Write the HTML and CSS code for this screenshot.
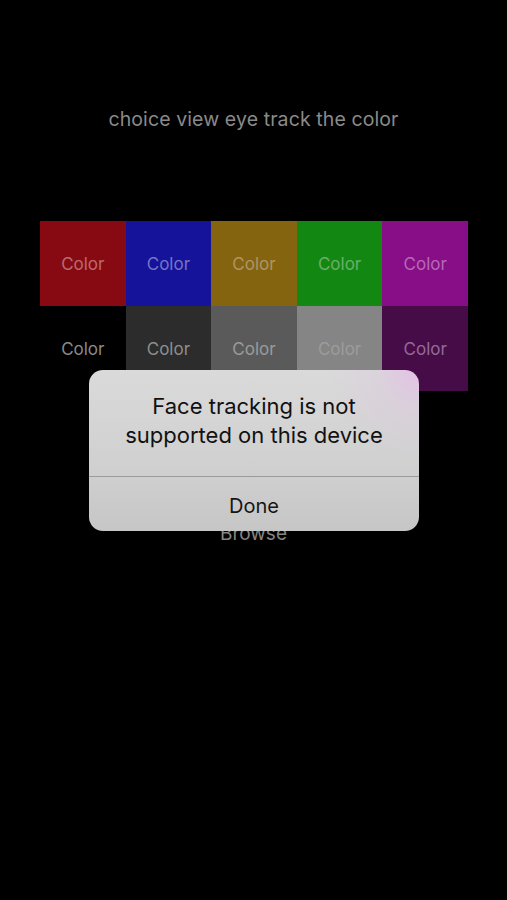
FILE: index.html
```html
<!DOCTYPE html>
<html>
<head>
<meta charset="utf-8">
<link rel="stylesheet" href="styles.css">
</head>
<body>
<main class="screen">
  <h1 class="title">choice view eye track the color</h1>
  <div class="grid">
    <div class="tile red">Color</div>
    <div class="tile blue">Color</div>
    <div class="tile olive">Color</div>
    <div class="tile green">Color</div>
    <div class="tile magenta">Color</div>
    <div class="tile black">Color</div>
    <div class="tile dark">Color</div>
    <div class="tile mid">Color</div>
    <div class="tile light">Color</div>
    <div class="tile plum">Color</div>
  </div>
  <div class="browse">Browse</div>
  <div class="alert">
    <div class="alert-msg">Face tracking is not<br>supported on this device</div>
    <div class="alert-btn">Done</div>
  </div>
</main>
</body>
</html>
```
FILE: styles.css
```css
html, body {
  margin: 0;
  background: #000;
}
.screen {
  position: relative;
  width: 507px;
  height: 900px;
  background: #000;
  font-family: Inter, "Noto Sans", sans-serif;
  display: flex;
  flex-direction: column;
  align-items: center;
}
.title {
  margin: 106px 0 0;
  font-size: 19.5px;
  font-weight: 400;
  color: #8a8a8a;
  line-height: 26px;
  letter-spacing: 0.1px;
}
.grid {
  margin-top: 89px;
  display: grid;
  grid-template-columns: repeat(5, 85.6px);
  grid-auto-rows: 85px;
  margin-left: 1px;
}
.tile {
  display: flex;
  align-items: center;
  justify-content: center;
  font-size: 17px;
  color: #8c8c8c;
  padding-top: 1px;
  box-sizing: border-box;
}
.red { background: #870a13; color: #b86a6e; }
.blue { background: #15139a; color: #7674c4; }
.olive { background: #84640e; color: #b09466; }
.green { background: #128812; color: #6aae6a; }
.magenta { background: #880e88; color: #b46ab4; }
.black { background: #000; color: #8a8a8a; }
.dark { background: #2c2c2c; color: #8e8e8e; }
.mid { background: #5a5a5a; color: #9a9a9a; }
.light { background: #858585; color: #9c9c9c; }
.plum { background: #460c48; color: #946a98; }
.browse {
  margin-top: 131px;
  font-size: 19px;
  color: #858585;
  line-height: 24px;
}
.alert {
  position: absolute;
  left: 89px;
  top: 370px;
  width: 330px;
  height: 161px;
  border-radius: 14px;
  overflow: hidden;
  background:
    radial-gradient(circle at 100% 0%, rgba(228, 190, 230, 0.9) 0, rgba(222, 200, 224, 0.4) 40px, rgba(220,220,220,0) 90px),
    linear-gradient(180deg, #dadada 0%, #d0d0d0 60%, #c6c6c6 100%);
  display: flex;
  flex-direction: column;
  color: #111;
}
.alert-msg {
  height: 107px;
  box-sizing: border-box;
  padding-top: 22px;
  text-align: center;
  font-size: 22px;
  line-height: 29px;
  border-bottom: 1.5px solid #9c9c9c;
}
.alert-btn {
  flex: 1;
  display: flex;
  align-items: center;
  justify-content: center;
  font-size: 20px;
  color: #151515;
  padding-top: 3px;
}
```
